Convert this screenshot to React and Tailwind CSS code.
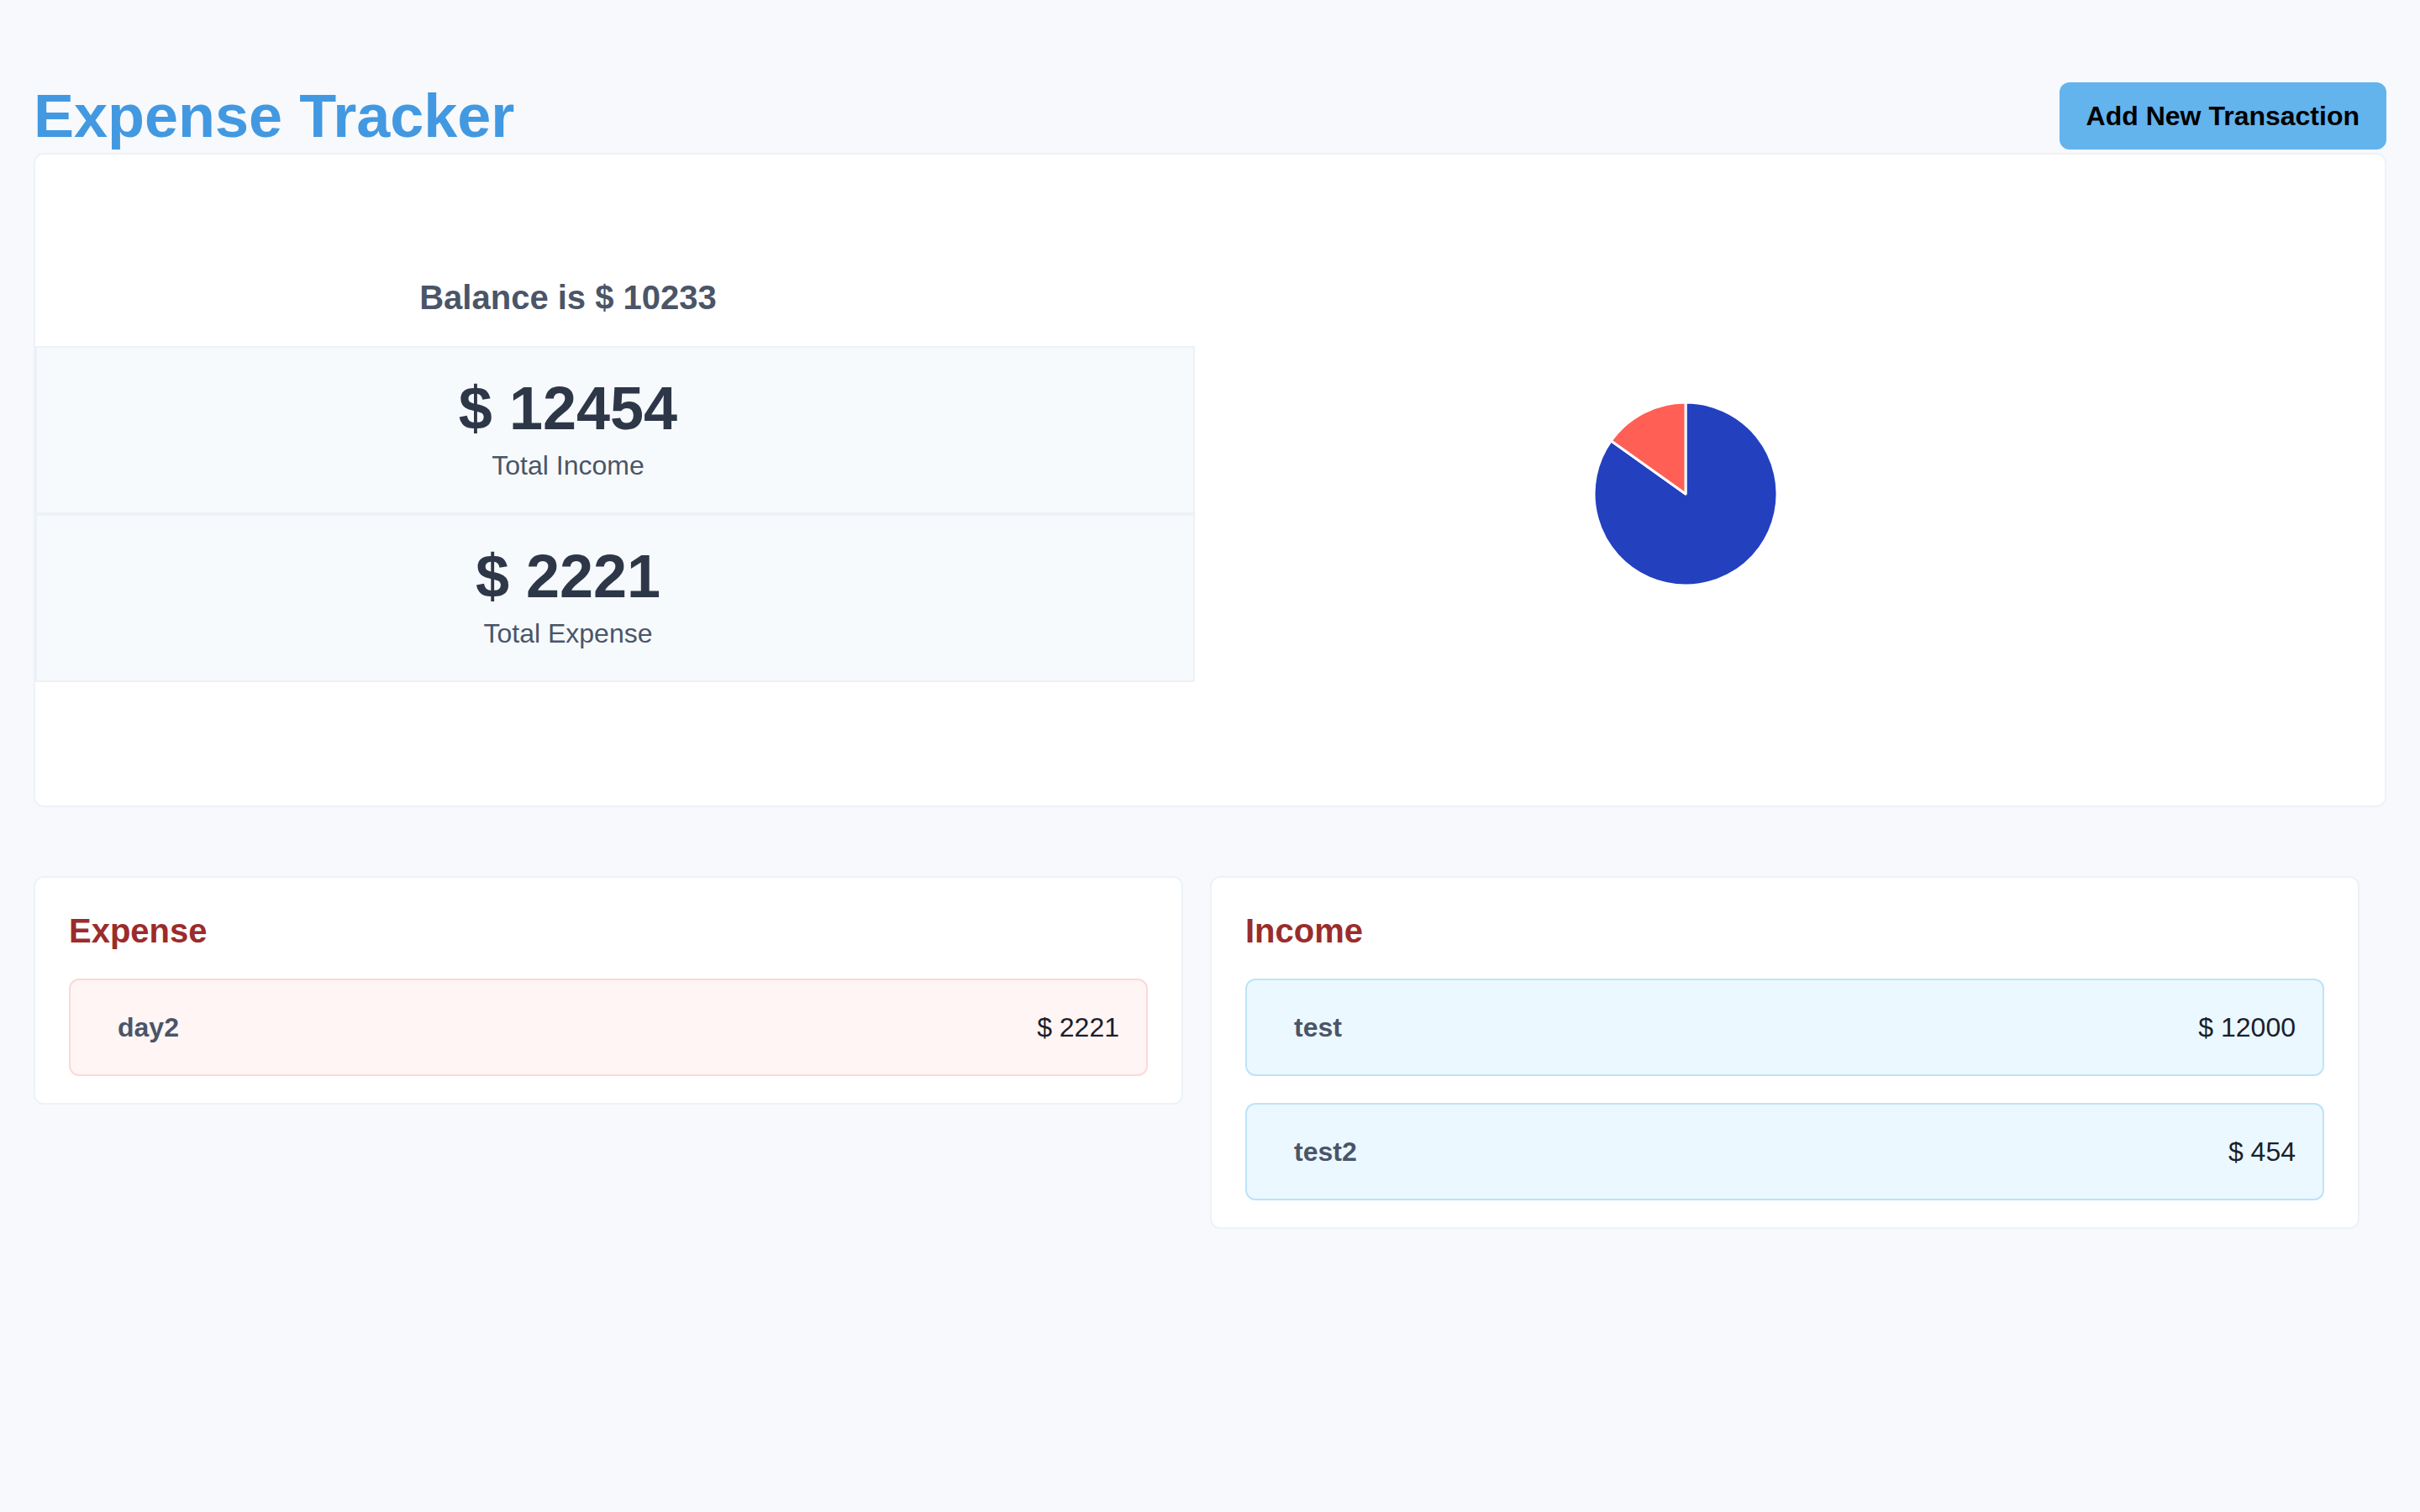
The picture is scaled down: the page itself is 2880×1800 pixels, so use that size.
import React from "react"

const expenses = [{ name: "day2", amount: 2221 }]
const incomes = [
  { name: "test", amount: 12000 },
  { name: "test2", amount: 454 },
]

const PieChart = () => {
  // expense share of 14675 is ~54.5deg, drawn counter-clockwise from the top
  return (
    <svg width="224" height="224" viewBox="0 0 224 224">
      <path
        d="M112 112 L112 3 A109 109 0 1 1 23.3 48.7 Z"
        fill="#2340bf"
        stroke="#ffffff"
        strokeWidth="3"
        strokeLinejoin="round"
      />
      <path
        d="M112 112 L23.3 48.7 A109 109 0 0 1 112 3 Z"
        fill="#ff5f55"
        stroke="#ffffff"
        strokeWidth="3"
        strokeLinejoin="round"
      />
    </svg>
  )
}

const TransactionList = ({ title, items, rowClass }) => {
  return (
    <div className="bg-white border-2 border-[#edf2f7] rounded-xl px-10 pt-[35px] pb-8">
      <h3 className="text-[40px] leading-[56px] font-bold text-[#9b2c2c] mb-[29px]">{title}</h3>
      <div className="flex flex-col gap-8">
        {items.map((item) => (
          <div
            key={item.name}
            className={`flex items-center justify-between rounded-xl border-2 py-8 pl-14 pr-8 text-[32px] leading-[48px] ${rowClass}`}
          >
            <span className="font-bold text-[#4a5568]">{item.name}</span>
            <span className="text-[#1a202c]">$ {item.amount}</span>
          </div>
        ))}
      </div>
    </div>
  )
}

export default function App() {
  return (
    <div className="min-h-screen bg-[#f7f9fc] px-10 pt-[98px] font-['Liberation_Sans',Arial,sans-serif]">
      {/* Header */}
      <div className="flex items-center justify-between">
        <h1 className="text-7xl leading-[80px] font-bold text-[#4299e1]">Expense Tracker</h1>
        <button className="bg-[#63b3ed] rounded-xl px-8 py-4 text-[32px] leading-[48px] font-bold text-black">
          Add New Transaction
        </button>
      </div>

      {/* Summary */}
      <div className="mt-1 flex bg-white border-2 border-[#edf2f7] rounded-xl">
        <div className="w-[1380px] flex flex-col pt-[142px] pb-[147px]">
          <h2 className="text-[40px] leading-[56px] font-bold text-[#4a5568] text-center pr-[112px] mb-[30px]">
            Balance is $ 10233
          </h2>
          <div className="border-2 border-[#edf2f7] bg-[#f7fafc] py-8 pr-[112px] text-center">
            <p className="text-7xl leading-[80px] font-bold text-[#2d3748]">$ 12454</p>
            <p className="mt-1 text-[32px] leading-[48px] text-[#4a5568]">Total Income</p>
          </div>
          <div className="border-2 border-[#edf2f7] bg-[#f7fafc] py-8 pr-[112px] text-center">
            <p className="text-7xl leading-[80px] font-bold text-[#2d3748]">$ 2221</p>
            <p className="mt-1 text-[32px] leading-[48px] text-[#4a5568]">Total Expense</p>
          </div>
        </div>
        <div className="flex-1 flex items-center justify-center pr-[248px] pt-[33px]">
          <PieChart />
        </div>
      </div>

      {/* Lists */}
      <div className="mt-[82px] flex items-start">
        <div className="w-1/2 pr-8">
          <TransactionList title="Expense" items={expenses} rowClass="bg-[#fff5f5] border-[#fed7d7]" />
        </div>
        <div className="w-1/2 pr-8">
          <TransactionList title="Income" items={incomes} rowClass="bg-[#ebf8ff] border-[#bee3f8]" />
        </div>
      </div>
    </div>
  )
}
